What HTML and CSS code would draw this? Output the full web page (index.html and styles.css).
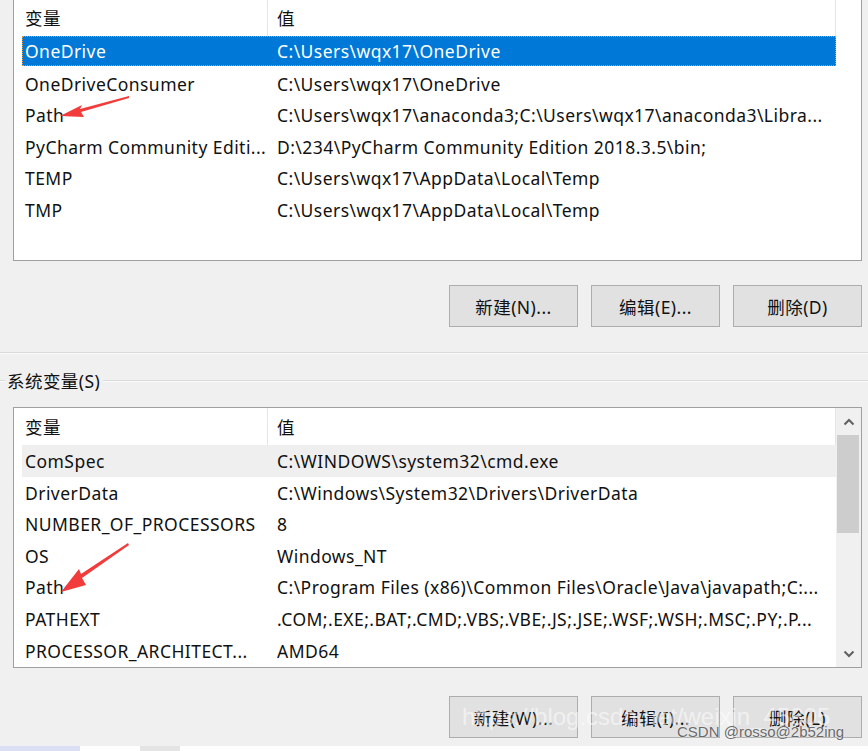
FILE: index.html
```html
<!DOCTYPE html>
<html lang="zh-CN">
<head>
<meta charset="utf-8">
<title>环境变量</title>
<link rel="stylesheet" href="styles.css">
</head>
<body>
<div class="screen">
  <div class="listbox top-list">
    <div class="list-main">
      <div class="header">
        <div class="hcell hname">变量</div>
        <div class="hcell hvalue">值</div>
      </div>
      <div class="rows">
        <div class="row selected"><span class="c1">OneDrive</span><span class="c2">C:\Users\wqx17\OneDrive</span></div>
        <div class="row"><span class="c1">OneDriveConsumer</span><span class="c2">C:\Users\wqx17\OneDrive</span></div>
        <div class="row"><span class="c1">Path</span><span class="c2">C:\Users\wqx17\anaconda3;C:\Users\wqx17\anaconda3\Libra...</span></div>
        <div class="row"><span class="c1">PyCharm Community Editi...</span><span class="c2">D:\234\PyCharm Community Edition 2018.3.5\bin;</span></div>
        <div class="row"><span class="c1">TEMP</span><span class="c2">C:\Users\wqx17\AppData\Local\Temp</span></div>
        <div class="row"><span class="c1">TMP</span><span class="c2">C:\Users\wqx17\AppData\Local\Temp</span></div>
      </div>
    </div>
  </div>

  <div class="buttons top-buttons">
    <button class="btn">新建(N)...</button>
    <button class="btn">编辑(E)...</button>
    <button class="btn btn-last">删除(D)</button>
  </div>

  <div class="sep"></div>

  <div class="group-title">
    <span class="gl-short"></span>
    <span class="gl-text">系统变量(S)</span>
    <span class="gl-line"></span>
  </div>

  <div class="listbox bottom-list">
    <div class="list-main">
      <div class="header">
        <div class="hcell hname">变量</div>
        <div class="hcell hvalue">值</div>
      </div>
      <div class="rows">
        <div class="row hover"><span class="c1">ComSpec</span><span class="c2">C:\WINDOWS\system32\cmd.exe</span></div>
        <div class="row"><span class="c1">DriverData</span><span class="c2">C:\Windows\System32\Drivers\DriverData</span></div>
        <div class="row"><span class="c1">NUMBER_OF_PROCESSORS</span><span class="c2">8</span></div>
        <div class="row"><span class="c1">OS</span><span class="c2">Windows_NT</span></div>
        <div class="row"><span class="c1">Path</span><span class="c2">C:\Program Files (x86)\Common Files\Oracle\Java\javapath;C:...</span></div>
        <div class="row"><span class="c1">PATHEXT</span><span class="c2">.COM;.EXE;.BAT;.CMD;.VBS;.VBE;.JS;.JSE;.WSF;.WSH;.MSC;.PY;.P...</span></div>
        <div class="row"><span class="c1">PROCESSOR_ARCHITECT...</span><span class="c2">AMD64</span></div>
      </div>
    </div>
    <div class="vscroll">
      <div class="sb-arrow">
        <svg width="12" height="8" viewBox="0 0 12 8"><polyline points="1.5,6.5 6,2 10.5,6.5" fill="none" stroke="#606060" stroke-width="2"/></svg>
      </div>
      <div class="sb-track"><div class="sb-thumb"></div></div>
      <div class="sb-arrow">
        <svg width="12" height="8" viewBox="0 0 12 8"><polyline points="1.5,1.5 6,6 10.5,1.5" fill="none" stroke="#606060" stroke-width="2"/></svg>
      </div>
    </div>
  </div>

  <div class="buttons bottom-buttons">
    <button class="btn">新建(W)...</button>
    <button class="btn">编辑(I)...</button>
    <button class="btn btn-last">删除(L)</button>
  </div>

  <div class="strip"><span class="strip-blue"></span><span class="strip-gray"></span></div>

  <svg class="annot" width="868" height="751" viewBox="0 0 868 751">
    <polygon points="129,96 80,109 82,105 60,116 84,117 81,112 129,98" fill="#f23b3b"/>
    <polygon points="128,543 81,574 79,569 61,592 86,585 82,578 129,545" fill="#f23b3b"/>
  </svg>

  <div class="wm-url">https://blog.csdn.net/weixin_45805</div>
  <div class="wm-csdn">CSDN @rosso@2b52ing</div>
</div>
</body>
</html>
```

FILE: styles.css
```css
* { box-sizing: border-box; }

html, body {
  margin: 0;
  padding: 0;
  background: #f0f0f0;
}

body {
  font-family: "Noto Sans", "Noto Sans CJK SC", sans-serif;
  font-size: 17.5px;
  letter-spacing: 0.45px;
  color: #111;
}

.screen {
  position: relative;
  width: 868px;
  height: 751px;
  overflow: hidden;
  display: flex;
  flex-direction: column;
}

/* ---------- list boxes ---------- */
.listbox {
  margin-left: 13px;
  width: 849px;
  background: #fff;
  border: 1px solid #a0a0a0;
  display: flex;
  overflow: hidden;
}

.top-list {
  margin-top: -2px;
  height: 263px;
}

.bottom-list {
  margin-top: 15px;
  height: 261px;
}

.list-main {
  width: 822px;
  flex: none;
  display: flex;
  flex-direction: column;
}

.header {
  display: flex;
  height: 37px;
  flex: none;
}

.hcell {
  height: 37px;
  line-height: 38px;
  border-right: 1px solid #e5e5e5;
  white-space: nowrap;
}

.hname {
  width: 254px;
  padding-left: 11px;
}

.hvalue {
  width: 568px;
  padding-left: 9px;
}

.rows {
  padding-left: 8px;
  display: flex;
  flex-direction: column;
}

.row {
  display: flex;
  height: 31.6px;
  line-height: 32.6px;
  white-space: nowrap;
  flex: none;
}

.row.selected {
  background: #0078d7;
  color: #fff;
  outline: 1px dotted #e09a3a;
  outline-offset: -1px;
  height: 30px;
  line-height: 31px;
  margin-bottom: 1.6px;
}

.row.hover {
  background: #efefef;
}

.c1 {
  width: 255px;
  padding-left: 3px;
  overflow: hidden;
  flex: none;
}

.c2 {
  flex: 1;
  overflow: hidden;
}

/* ---------- scrollbar ---------- */
.vscroll {
  width: 25px;
  flex: none;
  background: #f0f0f0;
  display: flex;
  flex-direction: column;
}

.sb-arrow {
  height: 27px;
  display: flex;
  align-items: center;
  justify-content: center;
  flex: none;
}

.sb-track {
  flex: 1;
  padding: 0 2px 0 1px;
}

.sb-thumb {
  height: 98px;
  background: #cdcdcd;
}

/* ---------- buttons ---------- */
.buttons {
  display: flex;
  justify-content: flex-end;
  padding-right: 6px;
  gap: 13px;
}

.top-buttons { margin-top: 24px; }
.bottom-buttons { margin-top: 28px; }

.btn {
  width: 129px;
  height: 42px;
  background: #e1e1e1;
  border: 1px solid #adadad;
  font-family: "Noto Sans", "Noto Sans CJK SC", sans-serif;
  font-size: 17.5px;
  letter-spacing: 0.45px;
  color: #111;
  padding: 0;
}

/* ---------- separator & group title ---------- */
.sep {
  margin-top: 25px;
  height: 2px;
  border-top: 1px solid #dadada;
  border-bottom: 1px solid #fbfbfb;
}

.group-title {
  margin-top: 16px;
  display: flex;
  align-items: center;
  height: 22px;
}

.gl-short {
  width: 5px;
  height: 2px;
  border-top: 1px solid #dadada;
  border-bottom: 1px solid #fbfbfb;
}

.gl-text {
  padding: 0 3px 0 2px;
  line-height: 22px;
}

.gl-line {
  flex: 1;
  height: 2px;
  border-top: 1px solid #dadada;
  border-bottom: 1px solid #fbfbfb;
}

/* ---------- bottom strip ---------- */
.strip {
  margin-top: auto;
  height: 5px;
  display: flex;
  background: #fff;
}

.strip-blue {
  width: 80px;
  background: #dcdff3;
}

.strip-gray {
  width: 40px;
  margin-left: 60px;
  background: #e4e4e4;
}

/* ---------- overlays ---------- */
.annot {
  position: absolute;
  left: 0;
  top: 0;
  pointer-events: none;
}

.wm-url {
  position: absolute;
  left: 462px;
  top: 703px;
  font-family: "Liberation Sans", sans-serif;
  font-size: 24px;
  letter-spacing: 0;
  color: rgba(255, 255, 255, 0.55);
  white-space: nowrap;
}

.wm-csdn {
  position: absolute;
  left: 677px;
  top: 723px;
  font-family: "Liberation Sans", sans-serif;
  font-size: 15px;
  letter-spacing: 0;
  color: #6a6a6a;
  text-shadow: 0 0 2px #fff;
  white-space: nowrap;
}
```
